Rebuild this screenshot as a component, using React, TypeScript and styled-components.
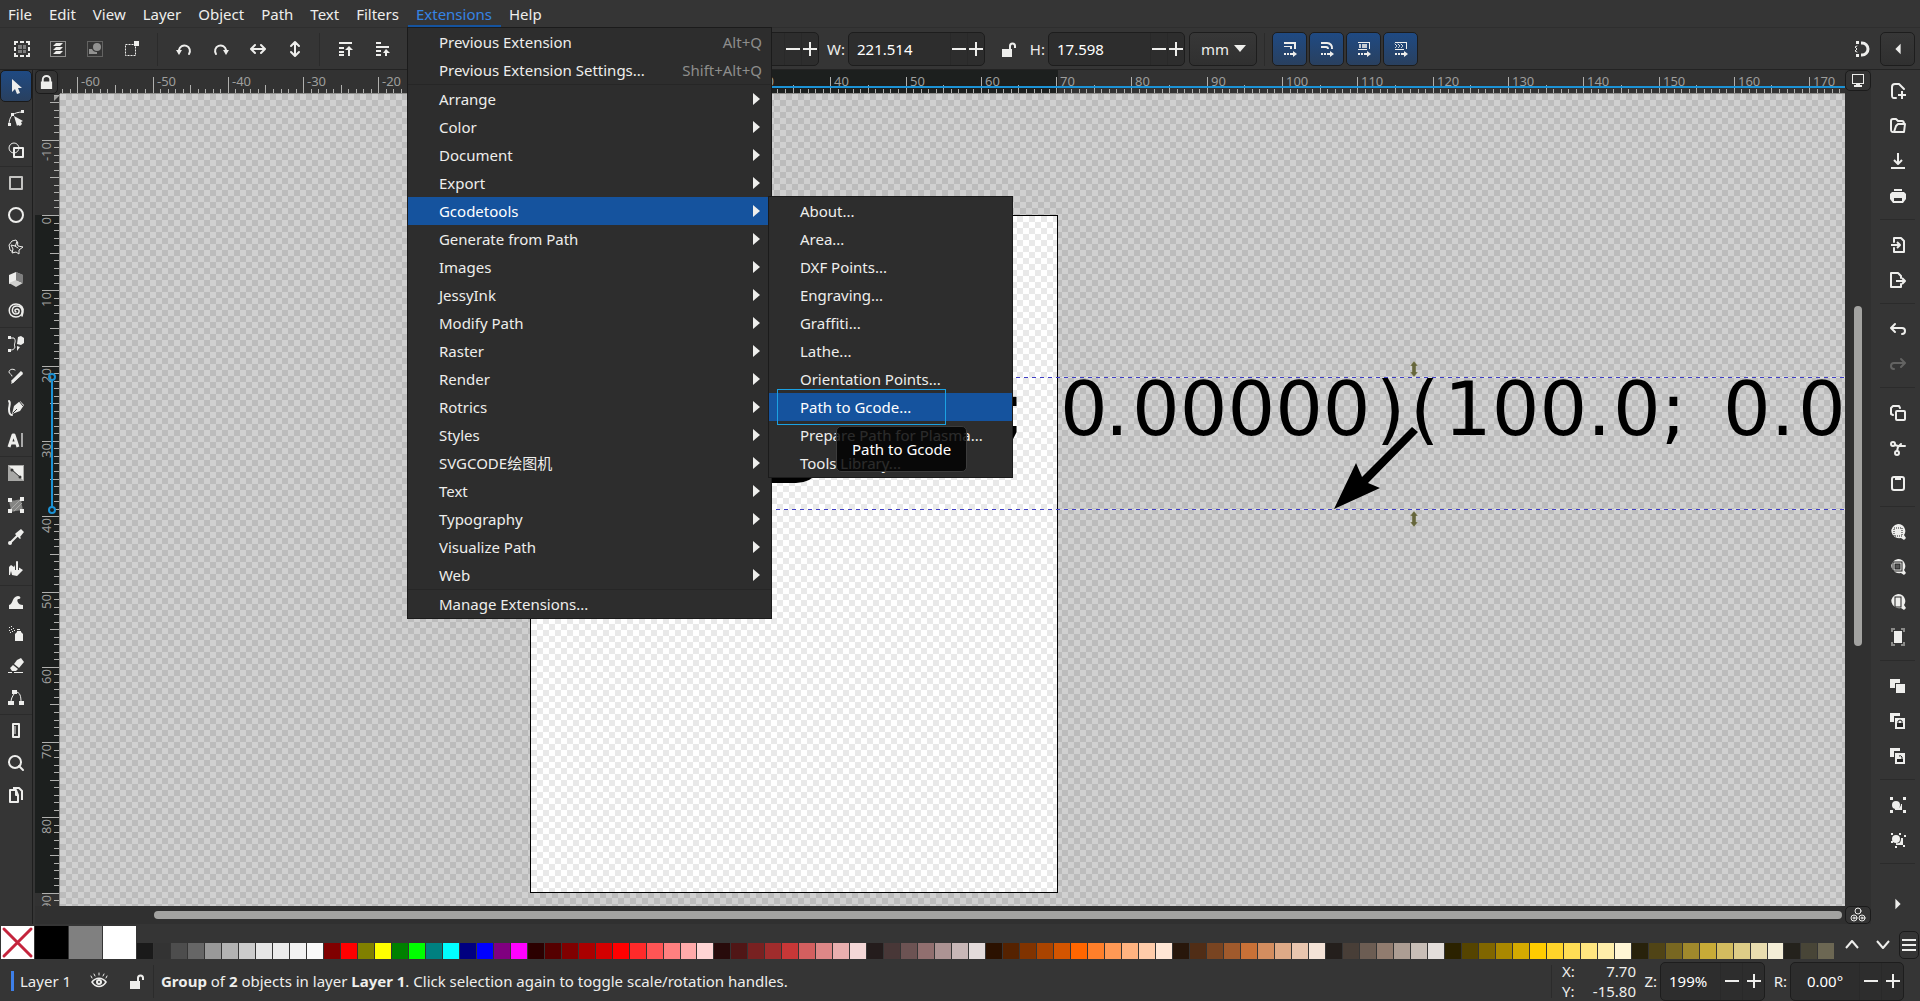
import React, { useEffect, useState } from "react";
import styled, { createGlobalStyle, css } from "styled-components";

const FG = "#eeeeec";
const BG = "#353535";
const EDGE = "#232323";
const FONT = `"Noto Sans", "Noto Sans CJK SC", sans-serif`;

const GlobalStyle = createGlobalStyle`
  * { box-sizing: border-box; }
  body { margin: 0; background: ${BG}; overflow: hidden; }
  button, input, select { font: inherit; color: inherit; margin: 0; }
`;

/* ---------- icons ---------- */

const Svg = styled.svg`
  display: block;
  flex: none;
  overflow: visible;
  fill: ${FG};
`;

const line = (w = 2) => ({
  fill: "none",
  stroke: FG,
  strokeWidth: w,
  strokeLinecap: "round" as const,
  strokeLinejoin: "round" as const,
});

const ICONS: Record<string, React.ReactNode> = {
  selectAll: (
    <>
      <path d="M0 0h4v2H2v2H0zM6 0h4v2H6zM12 0h4v4h-2V2h-2zM0 6h2v4H0zM14 6h2v4h-2zM0 12h2v2h2v2H0zM6 14h4v2H6zM14 12h2v4h-4v-2h2z" />
      <path fill="#7d7d7d" d="M4 4h4v4H4zM9 4h3v4H9zM4 9h4v3H4zM9 9h3v3H9z" />
    </>
  ),
  selectLayers: (
    <>
      <rect x=".5" y=".5" width="15" height="15" {...line(1)} strokeLinecap="butt" strokeDasharray="1 1" />
      <path d="M6 2h7l-3 3H3zM6 6h7l-3 3H3zM6 10h7l-3 3H3z" />
    </>
  ),
  deselect: (
    <g opacity=".5">
      <rect x=".5" y=".5" width="15" height="15" {...line(1)} strokeLinecap="butt" strokeDasharray="1 1" />
      <circle cx="10" cy="6" r="4" />
      <path d="M2 8h3a5 5 0 0 0 5 3v2H2z" />
    </g>
  ),
  touch: (
    <>
      <rect x="1.5" y="3.5" width="10" height="11" {...line(1)} strokeLinecap="butt" strokeDasharray="2 1" />
      <rect x="10" y="0" width="5" height="5" />
    </>
  ),
  rotL: (
    <>
      <path d="M3 11V9a5.500 5.500 0 1 1 10 4" {...line(2)} />
      <path d="M0 9h6l-3 5z" />
    </>
  ),
  rotR: (
    <>
      <path d="M13 11V9a5.500 5.500 0 1 0-10 4" {...line(2)} />
      <path d="M10 9h6l-3 5z" />
    </>
  ),
  flipH: <path d="M5 4 1 8l4 4M11 4l4 4-4 4M2 8h12" {...line(2)} />,
  flipV: <path d="M4 5l4-4 4 4M4 11l4 4 4-4M8 2v12" {...line(2)} />,
  top: <path d="M2 1h13v2H2zM2 6h5v2H2zM2 10h5v2H2zM2 13h5v2H2zM11 15V9H8l4-4 4 4h-3v6z" />,
  raise: <path d="M2 1h5v2H2zM2 5h13v2H2zM2 9h5v2H2zM2 13h5v2H2zM11 15v-3H9l3-4 4 4h-3v3z" />,
  lower: <path d="M2 1h5v2H2zM2 5h5v2H2zM2 9h13v2H2zM2 13h5v2H2z" />,
  bottom: <path d="M2 1h5v2H2zM2 5h5v2H2zM2 13h13v2H2z" />,
  unlock: <path d="M2 8h7V5a3 3 0 0 1 7 0v2h-2V5a1 1 0 0 0-3 0v3h1v8H2z" />,
  lock: <path d="M3 7V5a5 5 0 0 1 10 0v2h1v8H2V7zm2 0h6V5a3 3 0 0 0-6 0z" />,
  scaleStroke: <path d="M2 1h12v7h-2V3H2zM2 5h8v3H8V6H2zM2 12h2v2H2zM5 12h2v2H5zM8 12h3v-2l4 3-4 3v-2H8z" />,
  scaleCorner: <path d="M2 1h6a6 6 0 0 1 6 7h-2a4 4 0 0 0-4-5H2zM2 5h5a3 3 0 0 1 3 3H8a1 1 0 0 0-1-1H2zM2 12h2v2H2zM5 12h2v2H5zM8 12h3v-2l4 3-4 3v-2H8z" />,
  scaleGradient: (
    <>
      <path d="M2 1h12v7h-1V2H2zM2 12h2v2H2zM5 12h2v2H5zM8 12h3v-2l4 3-4 3v-2H8z" />
      <path opacity=".8" d="M3 3h2v4H3zM6 3h5v4H6z" />
      <path d="M2 8h9v1H2z" />
    </>
  ),
  scalePattern: (
    <>
      <path d="M2 1h12v7h-1V2H2zM2 12h2v2H2zM5 12h2v2H5zM8 12h3v-2l4 3-4 3v-2H8z" />
      <path d="m2 3 2 2-2 2M5 3l2 2-2 2M8 3l2 2-2 2" {...line(1)} strokeDasharray="1 1" />
      <path d="M2 8h9v1H2z" />
    </>
  ),
  magnet: (
    <>
      <path d="M7 2h1a6 6 0 0 1 0 12H7" {...line(3)} strokeLinecap="butt" />
      <path d="M2 0h3v3H2zM2 13h3v3H2z" />
      <path d="M3 5 1 6l2 2-2 2 2 1" {...line(1)} />
    </>
  ),
  left: <path d="M11 2v12L5 8z" />,
  right: <path d="M5 2v12l6-6z" />,
  monitor: <path d="M2 1h12v10H2zm1 1v8h10V2zM6 11h4v1h2v2H4v-2h2z" fillRule="evenodd" />,
  arrow: <path d="M4 1v13l3-3 2 5 3-1-2-5h4z" />,
  node: (
    <>
      <path d="M1 15C1 6 5 2 15 2" {...line(1)} />
      <path d="M0 13h3v3H0zM3 3h3v3H3zM13 0h3v3h-3zM6 6l9 5-2 1 1 2-2 2-2-1-1 1z" />
    </>
  ),
  shape: (
    <>
      <circle cx="6" cy="6" r="5" {...line(1)} />
      <path d="M6 6h9v9H6z" {...line(1)} strokeWidth="2" />
    </>
  ),
  rect: <rect x="2" y="2" width="12" height="12" {...line(2)} stroke="#c4c4c2" />,
  ellipse: <circle cx="8" cy="8" r="7" {...line(1)} strokeWidth="2" />,
  star: (
    <>
      <path d="M10 4 8 1 4 2 1 6l1 5 3 2M7 7l3 2" {...line(1)} />
      <path d="m9 3 1 4 5 1-4 3v4l-3-2-4 1 1-4-2-4 4 1z" {...line(1)} />
    </>
  ),
  cube: (
    <>
      <path d="m1 4 7-3v9l-7 3z" />
      <path fill="#aaa" d="m8 1 7 3v7l-7-2z" />
      <path fill="#cfcfcd" d="m1 12 7-3 7 3-7 4z" />
      <path fill="#7e7e7e" d="m8 1 7 3v8l-7-3z" />
    </>
  ),
  spiral: (
    <path
      d="M8 9c-2-1-1-3 1-3 3 0 3 5-1 5-5 0-5-8 1-8 7 0 7 11-1 11C-1 14-1 1 8 1c5 0 8 4 7 8l-1 4"
      {...line(1)}
      strokeWidth="1.500"
    />
  ),
  bezier: (
    <>
      <path d="M2 2h4c3 4-1 6 1 9-1 3-3 3-5 3" {...line(1)} />
      <path d="M0 0h3v3H0zM0 13h3v3H0zM10 1l3-1 3 2v5l-3 2-4-1zM9 10l3 1-3 4z" />
    </>
  ),
  pencil: (
    <>
      <path d="M5 15 3 16l1-3 9-9 2 2zM14 2l2 2" />
      <path d="M4 14 14 4" {...line(3)} strokeLinecap="butt" />
      <path d="M7 2C4 0 1 2 1 4s3 2 3 4" {...line(1)} />
    </>
  ),
  calligraphy: (
    <>
      <path d="M1 1c2 2 0 5 0 8s0 6 3 6" {...line(2)} />
      <path d="m4 14 2-8 6-5 4 4-4 6z" />
      <path d="m5 13 4-4" stroke={BG} strokeWidth="1" />
      <path d="m11 1 4 5" stroke={BG} strokeWidth="1" />
    </>
  ),
  text: (
    <>
      <path d="m1 15 4-12h1l4 12M3 11h5" {...line(2)} strokeWidth="3" strokeLinecap="butt" />
      <path fill="#aaa" d="M13 1h2v14h-2z" />
    </>
  ),
  gradient: (
    <>
      <rect width="16" height="16" fill="#a8a8a6" />
      <path d="M1 1h14v14z" />
      <path d="m4 5 8 7" stroke="#353535" strokeWidth="1" />
      <circle cx="4" cy="5" r="1.500" fill="#353535" />
      <circle cx="12" cy="12" r="1.500" fill="#353535" />
    </>
  ),
  mesh: (
    <>
      <path fill="#858583" d="M2 3c5 2 8-2 12 0-2 4 2 7 0 11-5-2-8 2-12 0 2-4-2-7 0-11z" />
      <path d="m3 12 9-9M6 14l8-8" stroke="#a8a8a6" />
      <path d="M0 1h4v4H0zM12 0h4v4h-4zM0 12h4v4H0zM12 12h4v4h-4z" />
    </>
  ),
  dropper: (
    <>
      <path d="m2 14 8-8" {...line(2)} />
      <path d="m8 4 5-4 3 3-4 5 1 1-1 1-5-5z" />
      <circle cx="2" cy="14" r="2" />
    </>
  ),
  bucket: (
    <>
      <path d="M1 14V6l2-2 3 2 1-2 8 5-6 6-5-1-1-4-1 4z" />
      <path d="M9 9V1" stroke={BG} strokeWidth="4" />
      <path d="M9 9V1" {...line(2)} />
    </>
  ),
  tweak: <path d="M1 15v-4c4 0 3-9 9-9 3 0 3 3 1 3-3-1-2 6 4 6v4z" />,
  spray: (
    <>
      <path d="M7 8l2-2V5h4v1l2 2v7H7zM9 3h3v1H9z" />
      <path d="M1 1h1v1H1zM3 0h1v1H3zM5 2h1v1H5zM1 4h1v1H1zM3 3h1v1H3zM6 4h1v1H6zM2 6h1v1H2zM4 5h1v1H4z" />
    </>
  ),
  eraser: <path d="m9 2 4-2 3 4-5 6-5-4zM5 7l5 4-2 2H4l-2-3zM0 14h4v1H0zM6 14h9v1H6z" />,
  connector: (
    <>
      <path d="M6 4C4 7 3 9 3 12M8 2c4 0 5 4 5 10" {...line(1)} />
      <path d="M4 0h5v4H4zM0 11h6v4H0zM11 11h5v4h-5z" />
    </>
  ),
  measure: (
    <>
      <rect x="5" y="1" width="6" height="13" {...line(1)} strokeWidth="2" />
      <path d="M6 4h2M6 6h2M6 8h2M6 10h2" stroke={FG} strokeWidth="1" />
    </>
  ),
  zoom: (
    <>
      <circle cx="7" cy="7" r="6" {...line(2)} />
      <path d="m11 11 4 4" {...line(2)} />
    </>
  ),
  pages: (
    <>
      <path d="M8 3H2v12h8V8z" {...line(2)} strokeLinecap="butt" />
      <path d="M8 3v5h2M5 1h6l3 3v9" {...line(2)} strokeLinecap="butt" />
    </>
  ),
  docNew: (
    <>
      <path d="M6 15H4c-2 0-2-1-2-3V4c0-2 1-3 3-3h4l5 5" {...line(2)} />
      <path d="M12 8v8M8 12h8" {...line(2)} strokeLinecap="butt" />
    </>
  ),
  open: (
    <>
      <path d="M3 14c-2 0-2-1-2-3V3c0-1 0-2 2-2h3l2 2h4c1 0 2 1 2 3" {...line(2)} />
      <path d="M4 14 6 8l2-2h7l-1 8z" {...line(2)} />
    </>
  ),
  save: <path d="M8 0v10M4 7l4 4 4-4M1 15h14" {...line(2)} strokeLinecap="butt" />,
  print: <path fillRule="evenodd" d="M4 1h8v2H4zM2 4h12l2 2v5l-3 4H3l-3-4V6zm2 6v3h8v-3z" />,
  importIcon: (
    <>
      <path d="M4 5V1h7l3 3v11H4v-4" {...line(2)} />
      <path d="M1 8h8M7 5l3 3-3 3" {...line(2)} strokeLinecap="butt" />
    </>
  ),
  exportIcon: (
    <>
      <path d="M11 12v3H1V1h7l3 3v2" {...line(2)} />
      <path d="M6 9h8M12 6l3 3-3 3" {...line(2)} strokeLinecap="butt" />
    </>
  ),
  undo: <path d="M5 3 1 7l4 4M2 7h10c4 0 4 6 0 6" {...line(2)} />,
  redo: <path d="m11 3 4 4-4 4M14 7H4c-4 0-4 6 0 6" {...line(2)} opacity=".25" />,
  copy: (
    <>
      <rect x="6" y="6" width="9" height="9" rx="1" {...line(2)} />
      <path d="M3 10 1 9V3l2-2h6l1 2" {...line(2)} />
    </>
  ),
  cut: (
    <>
      <circle cx="3" cy="4" r="2" {...line(2)} />
      <circle cx="7" cy="13" r="2" {...line(2)} />
      <path d="m5 5 3 1h7M7 11l1-4 3-3" {...line(2)} />
    </>
  ),
  paste: (
    <>
      <rect x="2" y="2" width="12" height="13" rx="2" {...line(2)} />
      <path d="M5 1h6v4H5z" />
    </>
  ),
  zoomSel: (
    <>
      <path d="M8 0a7 7 0 0 1 6 11l2 3-2 2-3-2A8 7 0 1 1 8 0z" />
      <rect x="4" y="4" width="8" height="8" fill="none" stroke="#222" strokeDasharray="1 1" />
    </>
  ),
  zoomDraw: (
    <>
      <path d="M8 0a7 7 0 0 1 6 11l2 3-2 2-3-2A8 7 0 1 1 8 0z" />
      <rect x="3" y="3" width="9" height="9" fill="none" stroke="#222" />
      <rect x="5" y="5" width="5" height="5" fill="#555" stroke="#222" />
    </>
  ),
  zoomPage: (
    <>
      <path d="M8 0a7 7 0 0 1 6 11l2 3-2 2-3-2A8 7 0 1 1 8 0z" />
      <rect x="5" y="3" width="6" height="10" fill="none" stroke="#222" />
    </>
  ),
  zoomCenter: (
    <>
      <path d="M4 2h8v12H4z" />
      <path d="M2 3V0h3M11 0h3v3M14 13v3h-3M5 16H2v-3" fill="none" stroke="#8a8a88" strokeWidth="2" />
    </>
  ),
  dup: <path d="M0 1h10v4H5v5H0zM6 6h9v9H6z" />,
  clone: (
    <>
      <path d="M0 0h10v3H4v6H0zM5 5h10v11H5z" />
      <path d="M7 10h6v4H7z" fill="#222" />
      <path d="M8 10V8q2-2 4 0v2" fill="none" stroke="#222" />
    </>
  ),
  unclone: (
    <>
      <path d="M0 0h10v3H4v6H0zM5 5h10v11H5z" />
      <path d="M7 11h6v3H7z" fill="#222" />
      <path d="M9 8q2-1 3 1v2" fill="none" stroke="#222" />
    </>
  ),
  group: (
    <>
      <path d="M0 0h3v3H0zM13 0h3v3h-3zM0 13h3v3H0zM13 13h3v3h-3zM11 7h1v6H5v-2c4 1 6-1 6-4z" />
      <circle cx="6" cy="8" r="4" />
    </>
  ),
  ungroup: (
    <>
      <path d="M1 1h2v2H1zM9 1h2v2H9zM14 3h2v2h-2zM1 9h2v2H1zM5 14h2v2H5zM13 13h2v2h-2zM11 6h2v7H6v-2c4 1 5-1 5-5z" />
      <circle cx="6" cy="7" r="4" />
    </>
  ),
  cms: (
    <g {...line(1)}>
      <circle cx="8" cy="4" r="3" />
      <circle cx="4" cy="11" r="3" />
      <circle cx="12" cy="11" r="3" />
      <circle cx="4" cy="11" r="1" />
      <circle cx="12" cy="11" r="1" />
    </g>
  ),
  up: <path d="m2 11 6-7 6 7" {...line(2)} strokeLinecap="butt" />,
  down: <path d="m2 4 6 7 6-7" {...line(2)} strokeLinecap="butt" />,
  burger: <path d="M1 2h14v2H1zM1 7h14v2H1zM1 12h14v2H1z" />,
  minus: <path d="M1 7h14v2H1z" />,
  plus: <path d="M1 7h6V1h2v6h6v2H9v6H7V9H1z" />,
  eye: (
    <>
      <path d="M0 9c4-6 12-6 16 0-4 7-12 7-16 0zm2 0c3 5 9 5 12 0-3-4-9-4-12 0z" fillRule="evenodd" />
      <circle cx="8" cy="9" r="3" />
      <circle cx="8" cy="9" r="1" fill={BG} />
      <path d="M1 5 0 3M4 3 3 1M8 2V0M12 3l1-2M15 5l1-2" {...line(1)} />
    </>
  ),
};

function Icon({ name, size = 16 }: { name: string; size?: number }) {
  return (
    <Svg width={size} height={size} viewBox="0 0 16 16" aria-hidden="true">
      {ICONS[name]}
    </Svg>
  );
}

/* ---------- shell ---------- */

const Shell = styled.div`
  display: flex;
  flex-direction: column;
  height: 100vh;
  background: ${BG};
  color: ${FG};
  font: 15px/20px ${FONT};
  user-select: none;
`;

const MenuBar = styled.nav`
  display: flex;
  height: 28px;
  flex: none;
  border-bottom: 1px solid #2e2e2e;
`;

const MenuSlot = styled.div`
  position: relative;
  display: flex;
`;

const MenuTitle = styled.button<{ $open?: boolean }>`
  height: 27px;
  padding: 4px 9px 1px 8px;
  border: 0;
  border-bottom: 2px solid ${(p) => (p.$open ? "#15539e" : "transparent")};
  background: none;
  color: ${(p) => (p.$open ? "#3584e4" : FG)};
`;

const panel = css`
  position: absolute;
  margin: 0;
  padding: 0;
  list-style: none;
  background: #2d2d2d;
  border: 1px solid #1b1b1b;
`;

const Dropdown = styled.ul`
  ${panel}
  top: 27px;
  left: -1px;
  width: 365px;
  z-index: 10;
`;

const Submenu = styled.ul`
  ${panel}
  top: -1px;
  left: 360px;
  width: 245px;
`;

const MenuRow = styled.li`
  position: relative;
`;

const MenuAction = styled.button<{ $active?: boolean }>`
  display: flex;
  align-items: center;
  justify-content: space-between;
  width: 100%;
  height: 28px;
  padding: 0 9px 0 31px;
  border: 0;
  text-align: left;
  white-space: nowrap;
  background: ${(p) => (p.$active ? "#15539e" : "none")};
  color: ${(p) => (p.$active ? "#ffffff" : FG)};
`;

const Shortcut = styled.span`
  color: #8e8e8c;
`;

const MenuRule = styled.li`
  height: 1px;
  background: #262626;
`;

const Caret = styled.i`
  border: 6px solid transparent;
  border-left: 7px solid ${FG};
  border-right: 0;
  margin-right: 2px;
`;

const FocusBox = styled.span`
  position: absolute;
  top: -4px;
  left: 8px;
  width: 169px;
  height: 36px;
  border: 1px solid #1ba1e2;
`;

const Tooltip = styled.div`
  position: absolute;
  z-index: 12;
  top: 33px;
  left: 67px;
  padding: 12px 15px;
  border: 1px solid #3c3c3c;
  border-radius: 5px;
  background: rgba(0, 0, 0, 0.82);
  color: #ffffff;
  white-space: nowrap;
`;

/* ---------- tool controls ---------- */

const ToolBar = styled.div`
  display: flex;
  align-items: center;
  height: 42px;
  flex: none;
  padding: 4px 5px 3px 3px;
  border-bottom: 1px solid ${EDGE};
`;

const ToolButton = styled.button<{ $w?: number; $ml?: number; $on?: boolean; $framed?: boolean }>`
  display: flex;
  align-items: center;
  justify-content: center;
  flex: none;
  width: ${(p) => p.$w ?? 37}px;
  height: 34px;
  margin-left: ${(p) => p.$ml ?? 0}px;
  padding: 0;
  border: 1px solid ${(p) => (p.$on || p.$framed ? "#1d1d1d" : "transparent")};
  border-radius: 5px;
  background: ${(p) =>
    p.$on ? "linear-gradient(#1f4a83, #29405f)" : p.$framed ? "linear-gradient(#373737, #303030)" : "none"};
`;

const VRule = styled.span<{ $h?: number; $mx?: string }>`
  width: 1px;
  height: ${(p) => p.$h ?? 33}px;
  margin: ${(p) => p.$mx ?? "0 7px"};
  flex: none;
  background: #2b2b2b;
`;

const FieldLabel = styled.label<{ $w?: number }>`
  width: ${(p) => p.$w ?? 29}px;
  padding-right: 3px;
  text-align: right;
  flex: none;
`;

const Spin = styled.div<{ $w: number; $h?: number }>`
  display: flex;
  flex: none;
  width: ${(p) => p.$w}px;
  height: ${(p) => p.$h ?? 34}px;
  border: 1px solid #1d1d1d;
  border-radius: 5px;
  background: #2d2d2d;
`;

const SpinInput = styled.input<{ $center?: boolean }>`
  flex: 1;
  min-width: 0;
  padding: 0 8px;
  border: 0;
  outline: 0;
  background: none;
  color: #ffffff;
  text-align: ${(p) => (p.$center ? "center" : "left")};
`;

const SpinStep = styled.button<{ $w?: number }>`
  display: flex;
  align-items: center;
  justify-content: center;
  width: ${(p) => p.$w ?? 17}px;
  padding: 0;
  border: 0;
  border-left: 1px solid #292929;
  background: none;
`;

const UnitBox = styled.div`
  position: relative;
  width: 68px;
  height: 34px;
  margin-left: 4px;
  flex: none;
`;

const UnitSelect = styled.select`
  appearance: none;
  width: 100%;
  height: 100%;
  padding: 0 11px;
  border: 1px solid #1d1d1d;
  border-radius: 5px;
  background: linear-gradient(#373737, #303030);
`;

const UnitArrow = styled.i`
  position: absolute;
  top: 13px;
  right: 11px;
  border: 6px solid transparent;
  border-top: 7px solid ${FG};
  border-bottom: 0;
  pointer-events: none;
`;

const Spacer = styled.div`
  flex: 1;
`;

function SpinField(p: { id: string; value: string; w: number; h?: number; step?: number; center?: boolean }) {
  return (
    <Spin $w={p.w} $h={p.h}>
      <SpinInput id={p.id} defaultValue={p.value} $center={p.center} />
      <SpinStep $w={p.step} aria-label="Decrease">
        <Icon name="minus" />
      </SpinStep>
      <SpinStep $w={p.step} aria-label="Increase">
        <Icon name="plus" />
      </SpinStep>
    </Spin>
  );
}

/* ---------- workspace ---------- */

const Work = styled.main`
  display: flex;
  flex: 1;
  min-height: 0;
`;

const ToolBox = styled.aside`
  width: 33px;
  flex: none;
  border-right: 1px solid #1e1e1e;
`;

const BoxTool = styled.button<{ $on?: boolean }>`
  display: flex;
  align-items: center;
  justify-content: center;
  width: 32px;
  height: 32px;
  padding: 0;
  border: 1px solid ${(p) => (p.$on ? "#1a1a1a" : "transparent")};
  border-radius: 5px;
  background: ${(p) => (p.$on ? "linear-gradient(#1f4a83, #29405f)" : "none")};
`;

const HRule = styled.div<{ $m?: string }>`
  height: 1px;
  margin: ${(p) => p.$m ?? "0"};
  background: #2b2b2b;
`;

const Desk = styled.section`
  display: grid;
  flex: 1;
  min-width: 0;
  margin-left: 2px;
  grid-template: 24px minmax(0, 1fr) 18px / 25px minmax(0, 1fr) 26px;
  background: #303030;
`;

const CornerButton = styled.button<{ $w?: number; $h?: number }>`
  display: flex;
  align-items: center;
  justify-content: center;
  width: ${(p) => p.$w ?? 26}px;
  height: ${(p) => p.$h ?? 24}px;
  padding: 0;
  border: 1px solid #1b1b1b;
  border-radius: 5px;
  background: #343434;
`;

const RulerSvg = styled.svg`
  display: block;
  width: 100%;
  height: 100%;
  background: #323232;
  font: 13px ${FONT};
  fill: #9e9e9c;
`;

const Canvas = styled.div`
  position: relative;
  overflow: hidden;
  background: repeating-conic-gradient(#bcbcbc 0 25%, #d0d0d0 0 50%) 0 0 / 12px 12px;
`;

const Page = styled.div`
  position: absolute;
  left: 470px;
  top: 121px;
  width: 528px;
  height: 678px;
  border: 1px solid #000000;
  background: repeating-conic-gradient(#e9e9e9 0 25%, #ffffff 0 50%) 0 0 / 12px 12px;
`;

const Artwork = styled.svg`
  position: absolute;
  inset: 0;
  width: 100%;
  height: 100%;
  font: 75px "DejaVu Sans", sans-serif;
`;

const VTrack = styled.div`
  display: flex;
  justify-content: center;
  padding: 212px 0 260px;
`;

const HTrack = styled.div`
  grid-column: 1 / 3;
  padding: 5px 3px 8px 119px;
`;

const Thumb = styled.div<{ $v?: boolean }>`
  width: ${(p) => (p.$v ? "8px" : "100%")};
  height: ${(p) => (p.$v ? "100%" : "8px")};
  border-radius: 4px;
  background: #a3a3a1;
`;

const Commands = styled.aside`
  display: flex;
  flex-direction: column;
  width: 49px;
  flex: none;
  padding: 3px 5px 3px 9px;
`;

const Command = styled.button`
  display: flex;
  align-items: center;
  justify-content: center;
  height: 35px;
  flex: none;
  padding: 0;
  border: 0;
  background: none;
`;

/* ---------- palette and status ---------- */

const Palette = styled.div`
  display: flex;
  align-items: flex-end;
  height: 37px;
  flex: none;
  padding: 0 1px 2px;
`;

const Swatch = styled.button<{ $c: string; $big?: boolean }>`
  flex: ${(p) => (p.$big ? "none" : "1 1 0")};
  min-width: 0;
  width: ${(p) => (p.$big ? "33px" : "auto")};
  height: ${(p) => (p.$big ? 33 : 16)}px;
  margin-right: 1px;
  padding: 0;
  border: 0;
  background: ${(p) => p.$c};
`;

const Swatches = styled.div`
  display: flex;
  flex: 1;
  min-width: 0;
`;

const PaletteNav = styled.button<{ $framed?: boolean; $w: number }>`
  display: flex;
  align-items: center;
  justify-content: center;
  width: ${(p) => p.$w}px;
  height: 28px;
  flex: none;
  padding: 0;
  border: 1px solid ${(p) => (p.$framed ? "#1b1b1b" : "transparent")};
  border-radius: 5px;
  background: none;
`;

const StatusBar = styled.footer`
  display: flex;
  align-items: center;
  height: 40px;
  flex: none;
  padding: 0 16px 0 11px;
`;

const LayerMark = styled.span`
  width: 3px;
  height: 20px;
  margin-right: 6px;
  background: #3d7fe8;
`;

const LayerName = styled.button`
  width: 60px;
  padding: 0;
  border: 0;
  background: none;
  text-align: left;
`;

const Hint = styled.p`
  flex: 1;
  margin: 0;
  white-space: nowrap;
`;

const Coords = styled.dl`
  display: grid;
  grid-template-columns: 30px 44px;
  margin: 0 0 0 3px;
  line-height: 20px;
`;

const CoordKey = styled.dt``;

const CoordValue = styled.dd`
  margin: 0;
  text-align: right;
`;

/* ---------- data ---------- */

const TITLES = ["File", "Edit", "View", "Layer", "Object", "Path", "Text", "Filters", "Extensions", "Help"];

const CATEGORIES = [
  "Arrange", "Color", "Document", "Export", "Gcodetools", "Generate from Path", "Images", "JessyInk",
  "Modify Path", "Raster", "Render", "Rotrics", "Styles", "SVGCODE绘图机", "Text", "Typography",
  "Visualize Path", "Web",
];

const GCODE = [
  "About...", "Area...", "DXF Points...", "Engraving...", "Graffiti...", "Lathe...", "Orientation Points...",
  "Path to Gcode...", "Prepare Path for Plasma...", "Tools Library...",
];

const TOOLS = [
  ["arrow", "node", "shape"],
  ["rect", "ellipse", "star", "cube", "spiral"],
  ["bezier", "pencil", "calligraphy", "text"],
  ["gradient", "mesh", "dropper", "bucket"],
  ["tweak", "spray", "eraser", "connector"],
  ["measure", "zoom", "pages"],
];

const COMMANDS = [
  ["docNew", "open", "save", "print"],
  ["importIcon", "exportIcon"],
  ["undo", "redo"],
  ["copy", "cut", "paste"],
  ["zoomSel", "zoomDraw", "zoomPage", "zoomCenter"],
  ["dup", "clone", "unclone"],
  ["group", "ungroup"],
];

const COLORS = (
  "1a1a1a 333333 4d4d4d 666666 999999 b3b3b3 cccccc e6e6e6 ececec f2f2f2 f9f9f9 " +
  "800000 ff0000 808000 ffff00 008000 00ff00 008080 00ffff 000080 0000ff 800080 ff00ff " +
  "2b0000 550000 800000 aa0000 d40000 ff0000 ff2a2a ff5555 ff8080 ffaaaa ffd5d5 " +
  "280b0b 501616 782121 a02c2c c83737 d35f5f de8787 e9afaf f4d7d7 " +
  "241c1c 483737 6c5353 916f6f ac9393 c8b7b7 e3dbdb " +
  "2b1100 552200 803300 aa4400 d45500 ff6600 ff7f2a ff9955 ffb380 ffccaa ffe6d5 " +
  "28170b 502d16 784421 a05a2c c87137 d38d5f deaa87 e9c6af f4e3d7 " +
  "241f1c 483e37 6c5d53 917c6f ac9d93 c8beb7 e3dedb " +
  "2b2200 554400 806600 aa8800 d4aa00 ffcc00 ffd42a ffdd55 ffe680 ffeeaa fff6d5 " +
  "28220b 504416 786721 a0892c c8ab37 d3bc5f decd87 e9ddaf f4eed7 " +
  "24221c 484537 6c6753"
).split(" ");

/* ---------- rulers ---------- */

const SCALE = 7.53;

function ticks(origin: number, length: number) {
  const first = Math.ceil(-origin / SCALE);
  const last = Math.floor((length - origin) / SCALE);
  const out: { u: number; at: number; size: number }[] = [];
  for (let u = first; u <= last; u++) {
    out.push({ u, at: Math.round(origin + u * SCALE), size: u % 10 === 0 ? 17 : u % 5 === 0 ? 9 : 5 });
  }
  return out;
}

function HRuler({ length }: { length: number }) {
  return (
    <RulerSvg shapeRendering="crispEdges">
      <rect x="470" width="528" height="24" fill="#1c1f1e" />
      {ticks(470, length).map((t) => (
        <g key={t.u}>
          <rect x={t.at - 1} y={24 - t.size} width="1" height={t.size} fill="#b0b0ae" />
          {t.u % 10 === 0 && <text x={t.at + 3} y="16">{t.u}</text>}
        </g>
      ))}
      <rect y="23" width="100%" height="1" fill="#8f8f8d" />
      <rect x="500" y="16" width="100%" height="2" fill="#1b92d5" />
    </RulerSvg>
  );
}

function VRuler({ length }: { length: number }) {
  return (
    <RulerSvg>
      <rect y="121" width="25" height="678" fill="#1c1f1e" />
      {ticks(122, length).map((t) => (
        <g key={t.u}>
          <rect x={25 - t.size - 1} y={t.at - 1} width={t.size + 1} height="1" fill="#b0b0ae" shapeRendering="crispEdges" />
          {t.u % 10 === 0 && (
            <text transform={`translate(16 ${t.at + 1}) rotate(-90)`} textAnchor="end">{t.u}</text>
          )}
        </g>
      ))}
      <rect x="24" width="1" height="100%" fill="#8f8f8d" />
      <path d="M19 2h5l-5 5z" />
      <path d="M17 286v127" stroke="#1b92d5" strokeWidth="2" />
      <circle cx="17" cy="283" r="3" fill="none" stroke="#1b92d5" strokeWidth="2" />
      <circle cx="17" cy="416" r="3" fill="none" stroke="#1b92d5" strokeWidth="2" />
    </RulerSvg>
  );
}

function useWindowSize() {
  const [size, setSize] = useState({ w: window.innerWidth, h: window.innerHeight });
  useEffect(() => {
    const update = () => setSize({ w: window.innerWidth, h: window.innerHeight });
    window.addEventListener("resize", update);
    return () => window.removeEventListener("resize", update);
  }, []);
  return size;
}

/* ---------- parts ---------- */

function ExtensionsMenu() {
  return (
    <Dropdown>
      <MenuRow>
        <MenuAction>Previous Extension<Shortcut>Alt+Q</Shortcut></MenuAction>
      </MenuRow>
      <MenuRow>
        <MenuAction>Previous Extension Settings...<Shortcut>Shift+Alt+Q</Shortcut></MenuAction>
      </MenuRow>
      <MenuRule />
      {CATEGORIES.map((c) => (
        <MenuRow key={c}>
          <MenuAction $active={c === "Gcodetools"}>{c}<Caret /></MenuAction>
          {c === "Gcodetools" && (
            <Submenu>
              {GCODE.map((g) => (
                <MenuRow key={g}>
                  <MenuAction $active={g === "Path to Gcode..."}>{g}</MenuAction>
                  {g === "Path to Gcode..." && (
                    <>
                      <FocusBox />
                      <Tooltip role="tooltip">Path to Gcode</Tooltip>
                    </>
                  )}
                </MenuRow>
              ))}
            </Submenu>
          )}
        </MenuRow>
      ))}
      <MenuRule />
      <MenuRow>
        <MenuAction>Manage Extensions...</MenuAction>
      </MenuRow>
    </Dropdown>
  );
}

function Tools() {
  return (
    <ToolBar>
      <ToolButton aria-label="Select all"><Icon name="selectAll" /></ToolButton>
      <ToolButton $w={36} aria-label="Select all in layers"><Icon name="selectLayers" /></ToolButton>
      <ToolButton aria-label="Deselect"><Icon name="deselect" /></ToolButton>
      <ToolButton aria-label="Touch selection"><Icon name="touch" /></ToolButton>
      <VRule />
      {["rotL", "rotR", "flipH", "flipV"].map((n) => (
        <ToolButton key={n} aria-label={n}><Icon name={n} /></ToolButton>
      ))}
      <VRule $mx="0 6px" />
      {["top", "raise", "lower", "bottom"].map((n) => (
        <ToolButton key={n} aria-label={n}><Icon name={n} /></ToolButton>
      ))}
      <VRule $mx="0 6px" />
      <FieldLabel htmlFor="fx">X:</FieldLabel>
      <SpinField id="fx" value="-48.414" w={137} />
      <FieldLabel htmlFor="fy">Y:</FieldLabel>
      <SpinField id="fy" value="21.532" w={137} />
      <FieldLabel htmlFor="fw">W:</FieldLabel>
      <SpinField id="fw" value="221.514" w={137} />
      <ToolButton $w={36} $ml={5} aria-label="Lock ratio"><Icon name="unlock" /></ToolButton>
      <FieldLabel htmlFor="fh" $w={22}>H:</FieldLabel>
      <SpinField id="fh" value="17.598" w={137} />
      <UnitBox>
        <UnitSelect aria-label="Unit" defaultValue="mm">
          <option>mm</option>
        </UnitSelect>
        <UnitArrow />
      </UnitBox>
      <VRule />
      {["scaleStroke", "scaleCorner", "scaleGradient", "scalePattern"].map((n, i) => (
        <ToolButton key={n} $w={35} $ml={i ? 2 : 0} $on aria-label={n}><Icon name={n} /></ToolButton>
      ))}
      <Spacer />
      <ToolButton aria-label="Snapping"><Icon name="magnet" /></ToolButton>
      <ToolButton $w={35} $framed aria-label="Snap options"><Icon name="left" size={14} /></ToolButton>
    </ToolBar>
  );
}

function Drawing() {
  return (
    <Artwork>
      <path d="M700 389h36q14 0 24-12h-60z" />
      <text y="341">
        <tspan x="940">; </tspan>
        <tspan x="1000">0</tspan>
        <tspan x="1045">.</tspan>
        <tspan x="1072">00000</tspan>
        <tspan x="1316">)</tspan>
        <tspan x="1350">(</tspan>
        <tspan x="1384">100.</tspan>
        <tspan x="1553">0;</tspan>
        <tspan x="1663">0.</tspan>
        <tspan x="1738">0</tspan>
      </text>
      <path d="m1274 415 22-46 6 14 50-50 6 5-50 51 12 5z" />
      <g shapeRendering="crispEdges" stroke="#ffffff" strokeWidth="1">
        <path d="M500 283.500H1785M500 415.500H1785" strokeOpacity=".4" />
        <path d="M500 283.500H1785M500 415.500H1785" stroke="#3f3fc4" strokeDasharray="4 4" />
      </g>
      {[275, 425].map((y) => (
        <path key={y} transform={`translate(1354 ${y})`} d="m0-8 4 5H2v6h2L0 8l-4-5h2v-6h-2z" fill="#66663c" stroke="#d0d0c0" strokeOpacity=".4" />
      ))}
    </Artwork>
  );
}

export default function App() {
  const { w, h } = useWindowSize();
  return (
    <Shell>
      <GlobalStyle />
      <MenuBar>
        {TITLES.map((t) => (
          <MenuSlot key={t}>
            <MenuTitle $open={t === "Extensions"}>{t}</MenuTitle>
            {t === "Extensions" && <ExtensionsMenu />}
          </MenuSlot>
        ))}
      </MenuBar>
      <Tools />
      <Work>
        <ToolBox>
          {TOOLS.map((g, i) => (
            <React.Fragment key={i}>
              {i > 0 && <HRule />}
              {g.map((n) => (
                <BoxTool key={n} $on={n === "arrow"} aria-label={n}><Icon name={n} /></BoxTool>
              ))}
            </React.Fragment>
          ))}
        </ToolBox>
        <Desk>
          <CornerButton $w={23} aria-label="Lock guides"><Icon name="lock" size={15} /></CornerButton>
          <HRuler length={w - 135} />
          <CornerButton $h={21} aria-label="Display mode"><Icon name="monitor" /></CornerButton>
          <VRuler length={h - 189} />
          <Canvas>
            <Page />
            <Drawing />
          </Canvas>
          <VTrack><Thumb $v /></VTrack>
          <HTrack><Thumb /></HTrack>
          <CornerButton $h={18} aria-label="Color management"><Icon name="cms" /></CornerButton>
        </Desk>
        <Commands>
          {COMMANDS.map((g, i) => (
            <React.Fragment key={i}>
              {g.map((n) => (
                <Command key={n} aria-label={n}><Icon name={n} /></Command>
              ))}
              <HRule $m="6px 0 7px" />
            </React.Fragment>
          ))}
          <Spacer />
          <Command aria-label="More"><Icon name="right" size={14} /></Command>
        </Commands>
      </Work>
      <Palette>
        <Swatch $big $c="#ffffff" aria-label="None">
          <Svg width="33" height="33" viewBox="0 0 33 33">
            <path d="m3 3 27 27M30 3 3 30" stroke="#c4243c" strokeWidth="3" strokeLinecap="round" />
          </Svg>
        </Swatch>
        <Swatch $big $c="#000000" aria-label="Black" />
        <Swatch $big $c="#808080" aria-label="Gray" />
        <Swatch $big $c="#ffffff" aria-label="White" />
        <Swatches>
          {COLORS.map((c, i) => (
            <Swatch key={i} $c={"#" + c} aria-label={c} />
          ))}
        </Swatches>
        <PaletteNav $w={31} aria-label="Previous colors"><Icon name="up" /></PaletteNav>
        <PaletteNav $w={32} aria-label="Next colors"><Icon name="down" /></PaletteNav>
        <PaletteNav $w={20} $framed aria-label="Palette menu"><Icon name="burger" /></PaletteNav>
      </Palette>
      <StatusBar>
        <LayerMark />
        <LayerName>Layer 1</LayerName>
        <ToolButton aria-label="Toggle visibility"><Icon name="eye" /></ToolButton>
        <ToolButton aria-label="Toggle lock"><Icon name="unlock" /></ToolButton>
        <VRule $mx="0 7px 0 -1px" />
        <Hint>
          <b>Group</b> of <b>2</b> objects in layer <b>Layer 1</b>. Click selection again to toggle scale/rotation handles.
        </Hint>
        <VRule />
        <Coords>
          <CoordKey>X:</CoordKey>
          <CoordValue>7.70</CoordValue>
          <CoordKey>Y:</CoordKey>
          <CoordValue>-15.80</CoordValue>
        </Coords>
        <FieldLabel htmlFor="fz" $w={24}>Z:</FieldLabel>
        <SpinField id="fz" value="199%" w={105} h={39} step={22} />
        <FieldLabel htmlFor="fr" $w={25}>R:</FieldLabel>
        <SpinField id="fr" value="0.00°" w={114} h={39} step={22} center />
      </StatusBar>
    </Shell>
  );
}
